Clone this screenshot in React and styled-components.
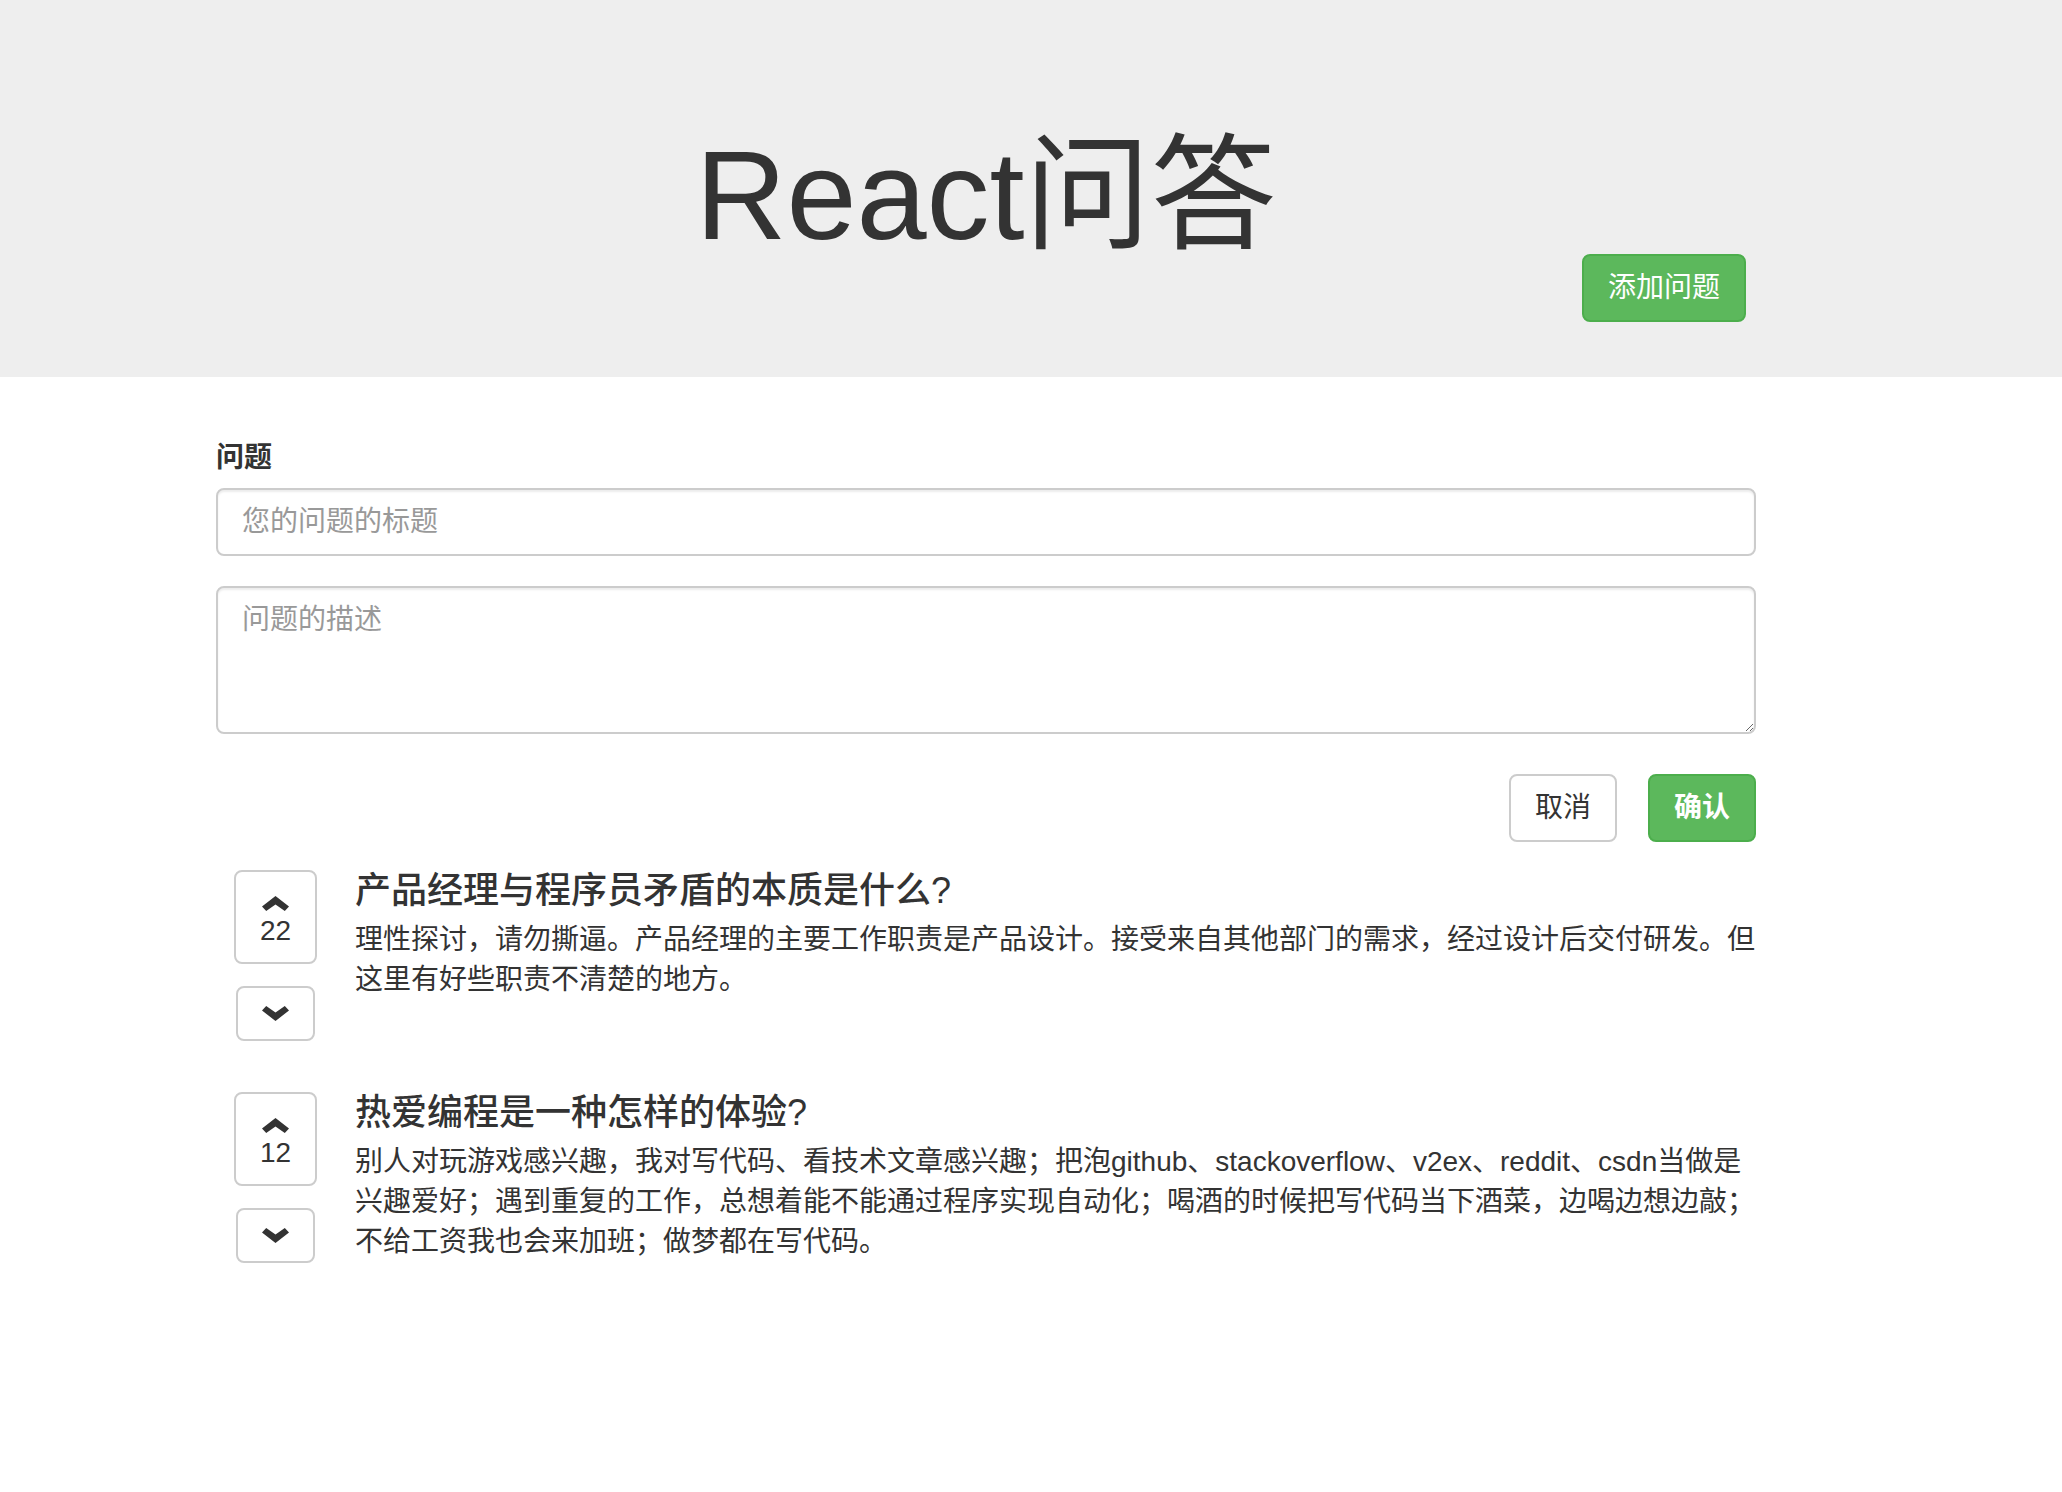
import React from "react";
import styled, { createGlobalStyle, css } from "styled-components";

const GlobalStyle = createGlobalStyle`
  html, body { margin: 0; padding: 0; background: #fff; }
  body {
    font-family: "Liberation Sans", "Noto Sans CJK SC", sans-serif;
    font-size: 28px;
    line-height: 40px;
    color: #333;
  }
  *, *::before, *::after { box-sizing: border-box; }
`;

const Header = styled.header`
  background: #eee;
  padding: 141px 0 55px;
`;

const Container = styled.div`
  width: 1540px;
  margin-left: 216px;
`;

const Title = styled.h1`
  margin: 0;
  text-align: center;
  font-size: 126px;
  line-height: 110px;
  font-weight: 400;
  color: #333;
`;

const HeaderActions = styled.div`
  display: flex;
  justify-content: flex-end;
  padding-right: 10px;
  margin-top: 3px;
`;

const Button = styled.button`
  height: 68px;
  padding: 0 24px;
  font-family: inherit;
  font-size: 28px;
  line-height: 40px;
  border-radius: 8px;
  border: 2px solid #ccc;
  background: #fff;
  color: #333;
  font-weight: ${(p) => (p.$bold ? 700 : 400)};
  cursor: pointer;
  ${(p) =>
    p.$variant === "success" &&
    css`
      background: #5cb85c;
      border-color: #4cae4c;
      color: #fff;
    `}
`;

const Main = styled.main`
  padding-top: 61px;
  padding-bottom: 120px;
`;

const FormGroup = styled.div`
  margin-bottom: 30px;
`;

const Label = styled.label`
  display: block;
  font-weight: 700;
  margin-bottom: 10px;
  line-height: 40px;
`;

const fieldStyles = css`
  display: block;
  width: 100%;
  padding: 12px 24px;
  border: 2px solid #ccc;
  border-radius: 8px;
  box-shadow: inset 0 2px 2px rgba(0, 0, 0, 0.075);
  font-family: inherit;
  font-size: 28px;
  line-height: 40px;
  color: #555;
  background: #fff;
  outline: none;
  &::placeholder {
    color: #999;
  }
`;

const TextInput = styled.input`
  ${fieldStyles}
  height: 68px;
`;

const TextArea = styled.textarea`
  ${fieldStyles}
  height: 148px;
  resize: vertical;
`;

const FormActions = styled.div`
  display: flex;
  justify-content: flex-end;
  gap: 31px;
  margin-top: 40px;
`;

const QuestionList = styled.ul`
  list-style: none;
  margin: 28px 0 0;
  padding: 0;
  display: flex;
  flex-direction: column;
  gap: 51px;
`;

const QuestionItem = styled.li`
  display: grid;
  grid-template-columns: 119px 1fr;
  column-gap: 20px;
  align-items: start;
`;

const VoteColumn = styled.div`
  display: flex;
  flex-direction: column;
  align-items: center;
  gap: 22px;
`;

const VoteButton = styled.button`
  display: flex;
  flex-direction: column;
  align-items: center;
  width: ${(p) => (p.$up ? "83px" : "79px")};
  padding: ${(p) => (p.$up ? "24px 0 11px" : "18px 0 18px")};
  border: 2px solid #ccc;
  border-radius: 8px;
  background: #fff;
  color: #333;
  font-family: inherit;
  cursor: pointer;
`;

const Count = styled.span`
  display: block;
  font-size: 28px;
  line-height: 40px;
`;

const QuestionBody = styled.div`
  min-width: 0;
`;

const QuestionTitle = styled.h4`
  margin: 1px 0 9px;
  font-size: 36px;
  line-height: 40px;
  font-weight: 500;
  color: #333;
`;

const QuestionDesc = styled.p`
  margin: 0;
  font-size: 28px;
  line-height: 40px;
`;

const ChevronUp = () => (
  <svg width="27" height="15" viewBox="0 0 27 15" style={{ display: "block" }}>
    <polygon points="13.5,0 27,10.5 22.8,15 13.5,8.4 4.2,15 0,10.5" fill="#333" />
  </svg>
);

const ChevronDown = () => (
  <svg width="27" height="15" viewBox="0 0 27 15" style={{ display: "block" }}>
    <polygon points="0,4.5 4.2,0 13.5,6.6 22.8,0 27,4.5 13.5,15" fill="#333" />
  </svg>
);

const questions = [
  {
    id: 1,
    title: "产品经理与程序员矛盾的本质是什么?",
    desc: "理性探讨，请勿撕逼。产品经理的主要工作职责是产品设计。接受来自其他部门的需求，经过设计后交付研发。但这里有好些职责不清楚的地方。",
    votes: 22,
  },
  {
    id: 2,
    title: "热爱编程是一种怎样的体验?",
    desc: "别人对玩游戏感兴趣，我对写代码、看技术文章感兴趣；把泡github、stackoverflow、v2ex、reddit、csdn当做是兴趣爱好；遇到重复的工作，总想着能不能通过程序实现自动化；喝酒的时候把写代码当下酒菜，边喝边想边敲；不给工资我也会来加班；做梦都在写代码。",
    votes: 12,
  },
];

export default function App() {
  return (
    <>
      <GlobalStyle />
      <Header>
        <Container>
          <Title>React问答</Title>
          <HeaderActions>
            <Button $variant="success">添加问题</Button>
          </HeaderActions>
        </Container>
      </Header>
      <Main>
        <Container>
          <form onSubmit={(e) => e.preventDefault()}>
            <FormGroup>
              <Label htmlFor="qtitle">问题</Label>
              <TextInput id="qtitle" type="text" placeholder="您的问题的标题" />
            </FormGroup>
            <FormGroup>
              <TextArea rows={3} placeholder="问题的描述" />
            </FormGroup>
            <FormActions>
              <Button type="button">取消</Button>
              <Button type="submit" $variant="success" $bold>
                确认
              </Button>
            </FormActions>
          </form>
          <QuestionList>
            {questions.map((q) => (
              <QuestionItem key={q.id}>
                <VoteColumn>
                  <VoteButton $up type="button">
                    <ChevronUp />
                    <Count>{q.votes}</Count>
                  </VoteButton>
                  <VoteButton type="button">
                    <ChevronDown />
                  </VoteButton>
                </VoteColumn>
                <QuestionBody>
                  <QuestionTitle>{q.title}</QuestionTitle>
                  <QuestionDesc>{q.desc}</QuestionDesc>
                </QuestionBody>
              </QuestionItem>
            ))}
          </QuestionList>
        </Container>
      </Main>
    </>
  );
}
